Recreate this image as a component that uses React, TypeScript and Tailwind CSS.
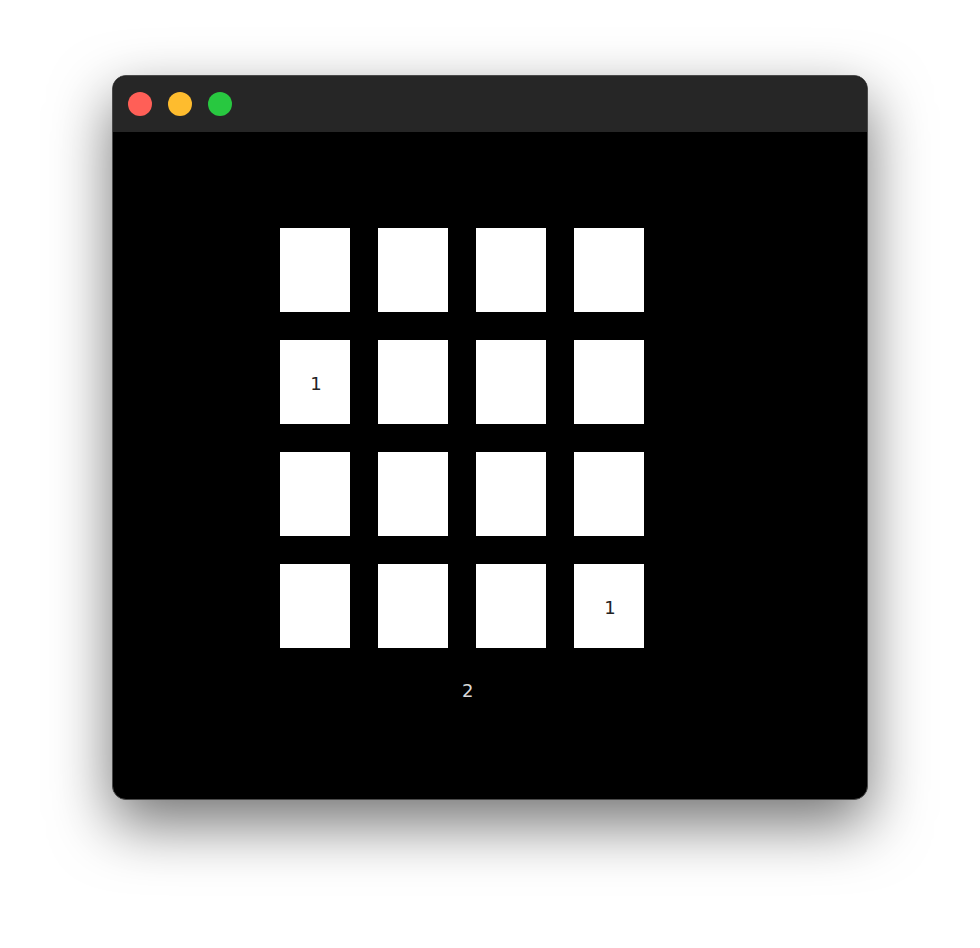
import React from 'react';

const marks: Record<number, string> = { 4: '1', 15: '1' };

const App: React.FC = () => {
  const tiles = Array.from({ length: 16 }, (_, i) => i);

  return (
    <div className="w-[980px] h-[948px] bg-white overflow-hidden" style={{ fontFamily: '"DejaVu Sans", sans-serif' }}>
      <div className="ml-[112px] mt-[75px] w-[756px] h-[725px] rounded-[14px] border border-[#4a4a4a] bg-black overflow-hidden shadow-[0_24px_60px_rgba(0,0,0,0.55)] flex flex-col">
        {/* Title bar */}
        <div className="h-[56px] bg-[#262626] flex items-center gap-4 pl-[15px]">
          <div className="w-6 h-6 rounded-full bg-[#ff5f57]" />
          <div className="w-6 h-6 rounded-full bg-[#febc2e]" />
          <div className="w-6 h-6 rounded-full bg-[#28c840]" />
        </div>

        {/* Board */}
        <div className="flex flex-col pl-[167px] pt-[96px]">
          <div className="grid grid-cols-[repeat(4,70px)] auto-rows-[84px] gap-[28px] w-fit">
            {tiles.map((i) => (
              <div key={i} className="bg-white flex items-center justify-center pt-[3px] pl-[2px] text-[18px] text-[#222]">
                {marks[i] ?? ''}
              </div>
            ))}
          </div>
          <div className="mt-[32px] ml-[182px] text-[18px] leading-[22px] text-[#d8d8d8]">2</div>
        </div>
      </div>
    </div>
  );
};

export default App;
